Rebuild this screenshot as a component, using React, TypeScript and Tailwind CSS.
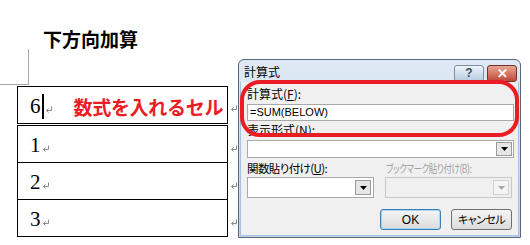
import React from "react";

const jp = "font-['Noto_Sans_CJK_JP','Noto_Sans',sans-serif]";

function ReturnMark() {
  return (
    <svg width="8" height="7" viewBox="0 0 8 7" className="block">
      <path d="M6.5 0.5 V4.5 H1.5" fill="none" stroke="#8a8a8a" strokeWidth="1" />
      <path d="M3.5 2.5 L1.5 4.5 L3.5 6.5" fill="none" stroke="#8a8a8a" strokeWidth="1" />
    </svg>
  );
}

function DropArrow({ disabled }: { disabled?: boolean }) {
  return (
    <div
      className={`flex h-full w-[16px] items-center justify-center border ${
        disabled ? "border-[#d0d0d0] bg-[#f4f4f4]" : "border-[#9a9a9a] bg-[#e6e6e6]"
      }`}
    >
      <svg width="7" height="4" viewBox="0 0 7 4">
        <path d="M0 0 H7 L3.5 4 Z" fill={disabled ? "#a8a8a8" : "#000"} />
      </svg>
    </div>
  );
}

function Cell({ label, first }: { label: string; first?: boolean }) {
  return (
    <div className="flex h-full items-center whitespace-nowrap pl-[12px] pt-[2px]">
      <span className="font-['Liberation_Serif',serif] text-[21px] leading-none text-black">{label}</span>
      {first && <span className="ml-[1px] h-[25px] w-[2px] bg-black" />}
      <span className="ml-[1px] mt-[6px]">
        <ReturnMark />
      </span>
      {first && (
        <span className={`ml-[21px] text-[19px] font-bold leading-none tracking-[-0.3px] text-[#ec1c24] ${jp}`}>
          数式を入れるセル
        </span>
      )}
    </div>
  );
}

export default function App() {
  const rows = ["6", "1", "2", "3"];
  return (
    <div className={`relative h-[245px] w-[530px] overflow-hidden bg-white ${jp}`}>
      <div className="pl-[43px] pt-[29px] text-[19px] font-bold leading-[19px] text-black">下方向加算</div>
      <div className="mt-[1px] h-[36px] w-[29px] border-b border-r border-[#a6a6a6]" />

      {/* table */}
      <div className="ml-[17px] mt-[1px] w-[211px]">
        <div className="relative h-[38px] border border-black">
          <Cell label={rows[0]} first />
          <span className="absolute left-[212px] top-[18px]"><ReturnMark /></span>
        </div>
        <div className="h-[1px]" />
        <div className="relative h-[38px] border border-black">
          <Cell label={rows[1]} />
          <span className="absolute left-[212px] top-[19px]"><ReturnMark /></span>
        </div>
        <div className="relative h-[37px] border-x border-b border-black">
          <Cell label={rows[2]} />
          <span className="absolute left-[212px] top-[19px]"><ReturnMark /></span>
        </div>
        <div className="relative h-[37px] border-x border-b border-black">
          <Cell label={rows[3]} />
          <span className="absolute left-[212px] top-[19px]"><ReturnMark /></span>
        </div>
      </div>

      {/* dialog */}
      <div className="absolute left-[238px] top-[59px] flex h-[179px] w-[283px] flex-col whitespace-nowrap rounded-t-[6px] border border-[#5a6777] bg-gradient-to-b from-[#dfe9f5] to-[#c3d4e8] text-[12px] text-black [font-feature-settings:'palt']">
        <div className="flex h-[22px] items-center justify-between pl-[5px] pr-[3px]">
          <span className="mt-[2px] leading-none">計算式</span>
          <div className="mt-[4px] flex gap-[3px]">
            <div className="flex h-[17px] w-[30px] items-center justify-center rounded-[3px] border border-[#7f90a6] bg-gradient-to-b from-[#eef3f9] to-[#b9cbe0] font-['Liberation_Sans',sans-serif] text-[12px] font-bold leading-none text-[#3e4d60]">
              ?
            </div>
            <div className="flex h-[17px] w-[30px] items-center justify-center rounded-[3px] border border-[#6e3328] bg-gradient-to-b from-[#e7a592] to-[#c0473a] font-['Liberation_Sans',sans-serif] text-[13px] font-bold leading-none text-white">
              ✕
            </div>
          </div>
        </div>
        <div className="mx-[1px] mb-[1px] flex flex-1 flex-col border-x border-b border-[#9fc3e6] bg-[#f0f0f0] px-[6px] pt-[4px]">
          <div className="h-[15px] leading-[15px]">計算式(<span className="underline">F</span>):</div>
          <div className="mt-[3px] flex h-[17px] w-[267px] items-center border border-[#a9a9a9] bg-white pl-[2px] font-['Liberation_Sans',sans-serif] text-[11px]">
            =SUM(BELOW)
          </div>
          <div className="mt-[1px] h-[15px] leading-[15px]">表示形式(<span className="underline">N</span>):</div>
          <div className="mt-[3px] flex h-[18px] w-[267px] justify-end border border-[#a9a9a9] bg-white p-[1px]">
            <DropArrow />
          </div>
          <div className="mt-[3px] flex h-[15px] text-[11.5px] leading-[15px] tracking-[-0.6px]">
            <span className="w-[139px]">関数貼り付け(<span className="underline">U</span>):</span>
            <span className="inline-block origin-left scale-x-[0.74] text-[#a0a0a0]">ブックマーク貼り付け(B):</span>
          </div>
          <div className="mt-[1px] flex gap-[11px]">
            <div className="flex h-[21px] w-[128px] justify-end border border-[#a9a9a9] bg-white p-[2px]">
              <DropArrow />
            </div>
            <div className="flex h-[21px] w-[128px] justify-end border border-[#c8c8c8] bg-[#f0f0f0] p-[2px]">
              <DropArrow disabled />
            </div>
          </div>
          <div className="mt-[11px] flex justify-end gap-[10px]">
            <div className="flex h-[21px] w-[61px] items-center justify-center rounded-[3px] border border-[#3c7fb1] bg-gradient-to-b from-[#f4f4f4] to-[#dcdcdc] font-['Liberation_Sans',sans-serif] shadow-[inset_0_0_0_1px_#a6d6f5]">
              OK
            </div>
            <div className="flex h-[21px] w-[61px] items-center justify-center rounded-[3px] border border-[#707070] bg-gradient-to-b from-[#f4f4f4] to-[#dcdcdc] text-[11px] tracking-[-0.5px]">
              キャンセル
            </div>
          </div>
        </div>
      </div>

      {/* red highlight */}
      <div className="absolute left-[240px] top-[80px] h-[57px] w-[279px] rounded-[20px] border-[4px] border-[#ec1c24]" />
    </div>
  );
}
